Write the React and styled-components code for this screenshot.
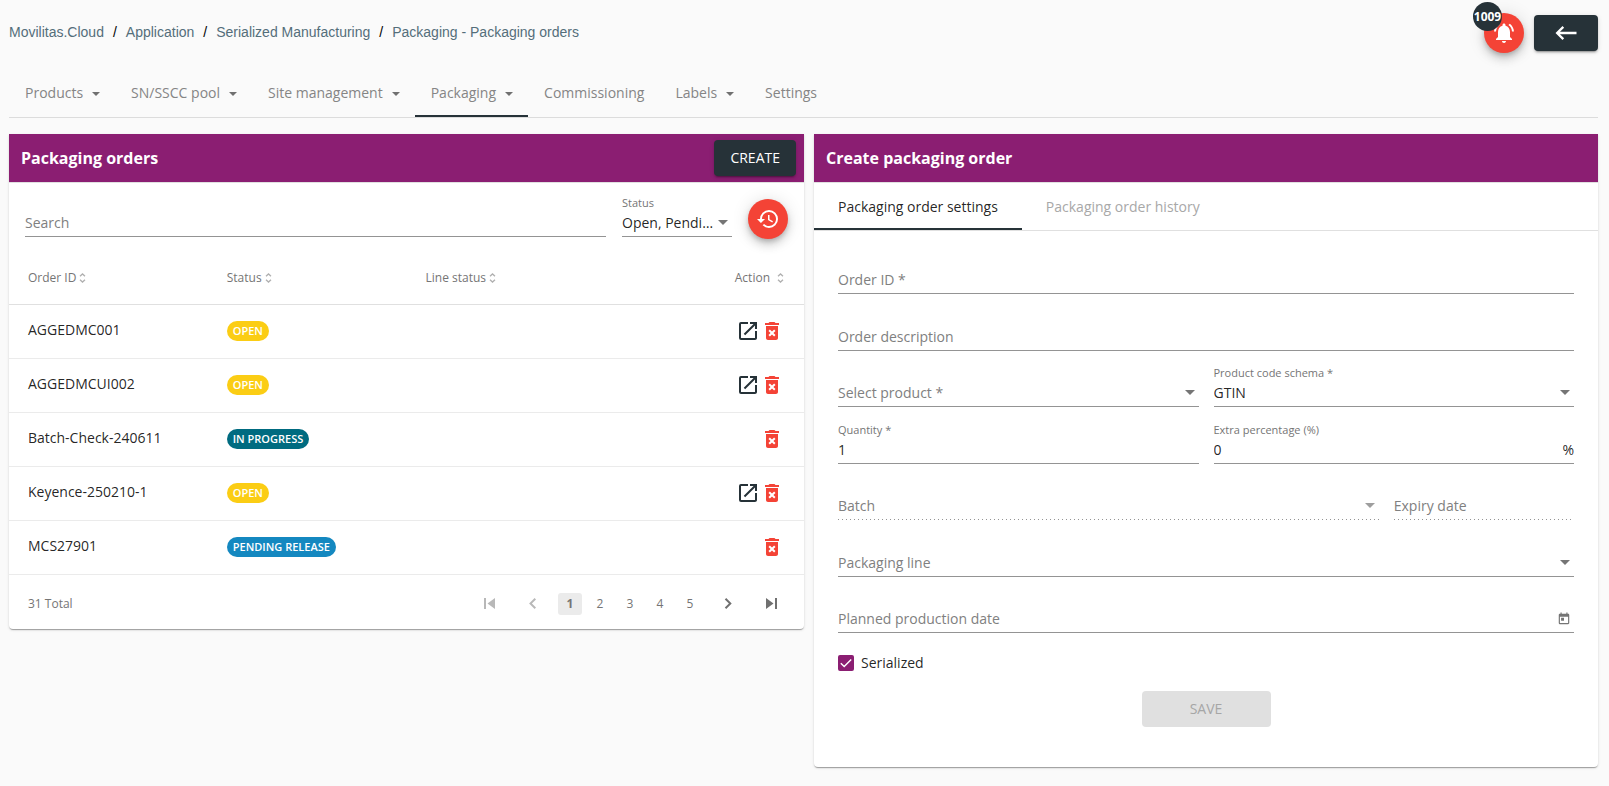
import React, { useState } from 'react';
import styled, { createGlobalStyle, css } from 'styled-components';
import {
  MdDeleteForever,
  MdHistory,
  MdKeyboardBackspace,
  MdNotificationsActive,
  MdOpenInNew,
  MdToday,
} from 'react-icons/md';

const GlobalStyle = createGlobalStyle`
  *, *::before, *::after {
    box-sizing: border-box;
  }

  body {
    margin: 0;
    background-color: #fafafa;
    color: rgba(0, 0, 0, 0.87);
    font-family: 'Open Sans', 'Noto Sans', sans-serif;
    font-size: 14px;
    line-height: 20px;
  }

  button, input, select {
    font: inherit;
    color: inherit;
  }

  button {
    padding: 0;
    border: none;
    background: none;
    cursor: pointer;
  }
`;

const Page = styled.div`
  padding: 0 11px 18px 9px;
`;

const TopBar = styled.header`
  display: flex;
  align-items: center;
  justify-content: space-between;
  height: 66px;
`;

const Breadcrumb = styled.nav`
  display: flex;
  gap: 9px;
  padding-bottom: 2px;
  color: #000;
  font-family: 'Liberation Sans', Arial, sans-serif;

  a {
    color: #546e7a;
    text-decoration: none;
  }
`;

const TopActions = styled.div`
  display: flex;
  align-items: center;
  gap: 10px;
`;

const RoundButton = styled.button`
  position: relative;
  display: flex;
  flex: none;
  align-items: center;
  justify-content: center;
  width: 40px;
  height: 40px;
  border-radius: 50%;
  background-color: #f44336;
  color: #fff;
  box-shadow: 0 3px 5px -1px rgba(0, 0, 0, 0.2), 0 6px 10px 0 rgba(0, 0, 0, 0.14),
    0 1px 18px 0 rgba(0, 0, 0, 0.12);
`;

const Badge = styled.span`
  position: absolute;
  top: -11px;
  left: -11px;
  width: 29px;
  height: 29px;
  border-radius: 50%;
  background-color: #263238;
  font-size: 12px;
  font-weight: 700;
  line-height: 29px;
  text-align: center;
`;

const RaisedButton = styled.button`
  display: flex;
  align-items: center;
  justify-content: center;
  min-width: 64px;
  height: 36px;
  padding: 0 16px;
  border-radius: 4px;
  background-color: #263238;
  color: #fff;
  box-shadow: 0 3px 1px -2px rgba(0, 0, 0, 0.2), 0 2px 2px 0 rgba(0, 0, 0, 0.14),
    0 1px 5px 0 rgba(0, 0, 0, 0.12);

  &:disabled {
    background-color: #e0e0e0;
    color: #a6a6a6;
    box-shadow: none;
    cursor: default;
  }
`;

const SaveButton = styled(RaisedButton)`
  width: 129px;
  margin: 18px auto 0;
`;

const MainNav = styled.nav`
  display: flex;
  height: 52px;
  border-bottom: 1px solid #dcdcdc;
`;

const NavItem = styled.a`
  display: flex;
  align-items: center;
  gap: 9px;
  padding: 6px 15px 1px 16px;
  border-bottom: 2px solid ${(p) => (p.$active ? '#263238' : 'transparent')};
  color: #858585;
  text-decoration: none;
`;

const Columns = styled.main`
  display: grid;
  grid-template-columns: minmax(0, 795fr) minmax(0, 784fr);
  align-items: start;
  gap: 10px;
  margin-top: 16px;
`;

const Card = styled.section`
  border-radius: 0 0 4px 4px;
  background-color: #fff;
  box-shadow: 0 2px 1px -1px rgba(0, 0, 0, 0.2), 0 1px 1px 0 rgba(0, 0, 0, 0.14),
    0 1px 3px 0 rgba(0, 0, 0, 0.12);
`;

const CardHeader = styled.div`
  display: flex;
  align-items: center;
  justify-content: space-between;
  height: 48px;
  padding: 0 8px 0 12px;
  background-color: #8b1e72;
`;

const CardTitle = styled.h2`
  margin: 0;
  color: #fff;
  font-size: 16px;
  font-weight: 700;
`;

const FieldBox = styled.div`
  display: flex;
  flex: ${(p) => p.$grow || 1};
  flex-direction: column;
  justify-content: flex-end;
  min-width: 0;
  border-bottom: 1px solid #949494;

  ${(p) => p.$fixed && css`
    flex: none;
    width: 110px;
  `}

  ${(p) => p.$disabled && css`
    padding-bottom: 1px;
    border-bottom: none;
    background: linear-gradient(to right, #949494 1px, transparent 1px) 0 100% / 4px 1px repeat-x;
  `}
`;

const Filters = styled.div`
  display: flex;
  align-items: flex-end;
  gap: 16px;
  height: 64px;
  padding: 0 16px 7px;
  border-top: 1px solid #e0e0e0;

  ${FieldBox} {
    margin-bottom: 2px;
  }
`;

const FieldLabel = styled.label`
  color: #757575;
  font-size: 11px;
  line-height: 16px;
`;

const Control = styled.div`
  display: grid;
  grid-template-columns: minmax(0, 1fr);
  align-items: center;
  height: 25px;
  padding-bottom: 2px;

  & > * {
    grid-area: 1 / 1;
  }
`;

const controlStyle = css`
  width: 100%;
  height: 20px;
  margin: 0;
  padding: 0;
  border: none;
  outline: none;
  background: transparent;
  line-height: 20px;
`;

const TextInput = styled.input`
  ${controlStyle}

  &::placeholder {
    color: #808080;
    opacity: 1;
  }
`;

const SelectInput = styled.select`
  ${controlStyle}
  appearance: none;
  padding-right: 18px;
  overflow: hidden;
  color: ${(p) => (p.$empty ? '#808080' : 'rgba(0, 0, 0, 0.87)')};
  text-overflow: ellipsis;
  white-space: nowrap;
  opacity: 1;
`;

const Caret = styled.span`
  margin-top: 2px;
  border: solid transparent;
  border-width: 4px 4px 0;
  border-top-color: #707070;
`;

const SelectCaret = styled.span`
  justify-self: end;
  margin-right: 4px;
  border: solid transparent;
  border-width: 5px 5px 0;
  border-top-color: ${(p) => (p.$disabled ? '#9e9e9e' : '#757575')};
  pointer-events: none;
`;

const Suffix = styled.span`
  justify-self: end;
`;

const CalendarButton = styled.button`
  display: flex;
  justify-self: end;
  margin-right: 3px;
  color: #757575;
`;

const Table = styled.table`
  width: 100%;
  border-collapse: collapse;
  table-layout: fixed;
`;

const HeadCell = styled.th`
  height: 58px;
  padding: 7px 20px 0 19px;
  border-bottom: 1px solid #e0e0e0;
  color: #757575;
  font-size: 12px;
  font-weight: 400;
  text-align: ${(p) => (p.$right ? 'right' : 'left')};
`;

const SortButton = styled.button`
  display: inline-flex;
  align-items: center;
  gap: ${(p) => (p.$wide ? '7px' : '3px')};
`;

const Cell = styled.td`
  height: 54px;
  padding: 0 20px 3px 19px;
  border-bottom: 1px solid #ebebeb;
`;

const STATUS_COLORS = {
  OPEN: '#fbcd14',
  'IN PROGRESS': '#006b80',
  'PENDING RELEASE': '#1488c0',
};

const StatusPill = styled.span`
  display: inline-block;
  margin-top: 2px;
  padding: 0 6px;
  border-radius: 10px;
  background-color: ${(p) => STATUS_COLORS[p.$status]};
  color: #fff;
  font-size: 11px;
  font-weight: 600;
  vertical-align: middle;
`;

const RowActions = styled.div`
  display: flex;
  justify-content: flex-end;
  margin-top: 2px;
`;

const IconButton = styled.button`
  display: flex;
  color: ${(p) => p.$color};
`;

const TableFooter = styled.footer`
  display: flex;
  align-items: center;
  justify-content: space-between;
  height: 54px;
  padding: 4px 11px 0 19px;
  color: #757575;
  font-size: 12px;
`;

const Pager = styled.nav`
  display: flex;
  align-items: center;
`;

const PagerArrow = styled.button`
  display: flex;
  justify-content: center;
  width: 44px;
  color: #707070;

  &:disabled {
    color: #b8b8b8;
    cursor: default;
  }
`;

const PageButton = styled.button`
  width: 24px;
  height: 22px;
  margin: 0 3px;
  border-radius: 3px;
  background-color: ${(p) => (p.$active ? '#ebebeb' : 'transparent')};
  font-weight: ${(p) => (p.$active ? 700 : 400)};
`;

const TabList = styled.div`
  display: flex;
  height: 49px;
  border-top: 1px solid #e0e0e0;
  border-bottom: 1px solid #e0e0e0;
`;

const Tab = styled.button`
  padding: 2px 24px 0;
  border-bottom: 2px solid ${(p) => (p.$active ? '#263238' : 'transparent')};
  color: ${(p) => (p.$active ? 'rgba(0, 0, 0, 0.87)' : '#a8a8a8')};
`;

const Form = styled.form`
  padding: 7px 24px 40px;
`;

const FormRows = styled.div`
  display: grid;
  grid-auto-rows: 56px 57px;
`;

const FormRow = styled.div`
  display: flex;
  gap: 15px;
`;

const CheckLabel = styled.label`
  display: flex;
  align-items: center;
  gap: 7px;
  margin-top: 20px;
`;

const CheckBox = styled.span`
  display: grid;
  width: 16px;
  height: 16px;

  & > * {
    grid-area: 1 / 1;
  }

  svg {
    pointer-events: none;
  }
`;

const CheckInput = styled.input`
  appearance: none;
  width: 16px;
  height: 16px;
  margin: 0;
  border: 2px solid #757575;
  border-radius: 2px;

  &:checked {
    border-color: #8b1e72;
    background-color: #8b1e72;
  }
`;

function SortIcon() {
  return (
    <svg width="7" height="10" viewBox="0 0 7 10" fill="none" stroke="#b0b0b0" strokeWidth="1.3">
      <path d="M1 3.2 3.5.9 6 3.2M1 6.8l2.5 2.3L6 6.8" />
    </svg>
  );
}

const PAGER_PATHS = {
  first: 'M0 0h2v11H0zM11 0v11L3.5 5.5z',
  prev: 'M6.6 0 8 1.4 3.9 5.5 8 9.6 6.6 11 1.1 5.5z',
  next: 'M4.2 0 2.8 1.4 6.9 5.5 2.8 9.6 4.2 11l5.5-5.5z',
  last: 'M9 0h2v11H9zM0 0v11l7.5-5.5z',
};

function PagerIcon({ name }) {
  return (
    <svg width="11" height="11" viewBox="0 0 11 11" fill="currentColor">
      <path d={PAGER_PATHS[name]} />
    </svg>
  );
}

function Field({ id, label, floating, grow, fixed, suffix, calendar, ...rest }) {
  return (
    <FieldBox $grow={grow} $fixed={fixed} $disabled={rest.disabled}>
      {floating && <FieldLabel htmlFor={id}>{label}</FieldLabel>}
      <Control>
        <TextInput
          id={id}
          type="text"
          placeholder={floating ? undefined : label}
          aria-label={floating ? undefined : label}
          {...rest}
        />
        {suffix && <Suffix>{suffix}</Suffix>}
        {calendar && (
          <CalendarButton type="button" aria-label="Open calendar">
            <MdToday size={14} />
          </CalendarButton>
        )}
      </Control>
    </FieldBox>
  );
}

function SelectField({ id, label, floating, value, grow, fixed, disabled }) {
  return (
    <FieldBox $grow={grow} $fixed={fixed} $disabled={disabled}>
      {floating && <FieldLabel htmlFor={id}>{label}</FieldLabel>}
      <Control>
        <SelectInput
          id={id}
          aria-label={floating ? undefined : label}
          $empty={!value}
          disabled={disabled}
        >
          <option>{value || label}</option>
        </SelectInput>
        <SelectCaret $disabled={disabled} />
      </Control>
    </FieldBox>
  );
}

const crumbs = ['Movilitas.Cloud', 'Application', 'Serialized Manufacturing', 'Packaging - Packaging orders'];

const navItems = [
  { label: 'Products', menu: true },
  { label: 'SN/SSCC pool', menu: true },
  { label: 'Site management', menu: true },
  { label: 'Packaging', menu: true, active: true },
  { label: 'Commissioning' },
  { label: 'Labels', menu: true },
  { label: 'Settings' },
];

const orders = [
  { id: 'AGGEDMC001', status: 'OPEN' },
  { id: 'AGGEDMCUI002', status: 'OPEN' },
  { id: 'Batch-Check-240611', status: 'IN PROGRESS' },
  { id: 'Keyence-250210-1', status: 'OPEN' },
  { id: 'MCS27901', status: 'PENDING RELEASE' },
];

function OrdersCard() {
  const [page, setPage] = useState(1);

  return (
    <Card>
      <CardHeader>
        <CardTitle>Packaging orders</CardTitle>
        <RaisedButton type="button">CREATE</RaisedButton>
      </CardHeader>
      <Filters>
        <Field id="search" label="Search" />
        <SelectField id="status" label="Status" floating fixed value="Open, Pending Release, In Progress" />
        <RoundButton type="button" aria-label="History">
          <MdHistory size={24} />
        </RoundButton>
      </Filters>
      <Table>
        <thead>
          <tr>
            {['Order ID', 'Status', 'Line status', 'Action'].map((name) => (
              <HeadCell key={name} $right={name === 'Action'}>
                <SortButton type="button" $wide={name === 'Action'}>
                  {name}
                  <SortIcon />
                </SortButton>
              </HeadCell>
            ))}
          </tr>
        </thead>
        <tbody>
          {orders.map((order) => (
            <tr key={order.id}>
              <Cell>{order.id}</Cell>
              <Cell>
                <StatusPill $status={order.status}>{order.status}</StatusPill>
              </Cell>
              <Cell />
              <Cell>
                <RowActions>
                  {order.status === 'OPEN' && (
                    <IconButton type="button" aria-label={`Open ${order.id}`} $color="#263238">
                      <MdOpenInNew size={24} />
                    </IconButton>
                  )}
                  <IconButton type="button" aria-label={`Delete ${order.id}`} $color="#f44336">
                    <MdDeleteForever size={24} />
                  </IconButton>
                </RowActions>
              </Cell>
            </tr>
          ))}
        </tbody>
      </Table>
      <TableFooter>
        <span>31 Total</span>
        <Pager aria-label="Pages">
          <PagerArrow aria-label="First page" disabled={page === 1} onClick={() => setPage(1)}>
            <PagerIcon name="first" />
          </PagerArrow>
          <PagerArrow aria-label="Previous page" disabled={page === 1} onClick={() => setPage(page - 1)}>
            <PagerIcon name="prev" />
          </PagerArrow>
          {[1, 2, 3, 4, 5].map((n) => (
            <PageButton key={n} $active={n === page} onClick={() => setPage(n)}>
              {n}
            </PageButton>
          ))}
          <PagerArrow aria-label="Next page" disabled={page === 5} onClick={() => setPage(page + 1)}>
            <PagerIcon name="next" />
          </PagerArrow>
          <PagerArrow aria-label="Last page" disabled={page === 5} onClick={() => setPage(5)}>
            <PagerIcon name="last" />
          </PagerArrow>
        </Pager>
      </TableFooter>
    </Card>
  );
}

function OrderForm() {
  const [tab, setTab] = useState(0);

  return (
    <Card>
      <CardHeader>
        <CardTitle>Create packaging order</CardTitle>
      </CardHeader>
      <TabList role="tablist">
        {['Packaging order settings', 'Packaging order history'].map((name, index) => (
          <Tab
            key={name}
            type="button"
            role="tab"
            aria-selected={index === tab}
            $active={index === tab}
            onClick={() => setTab(index)}
          >
            {name}
          </Tab>
        ))}
      </TabList>
      <Form onSubmit={(e) => e.preventDefault()}>
        <FormRows>
          <FormRow>
            <Field id="order-id" label="Order ID *" />
          </FormRow>
          <FormRow>
            <Field id="order-description" label="Order description" />
          </FormRow>
          <FormRow>
            <SelectField id="product" label="Select product *" />
            <SelectField id="schema" label="Product code schema *" floating value="GTIN" />
          </FormRow>
          <FormRow>
            <Field id="quantity" label="Quantity *" floating defaultValue="1" />
            <Field id="extra" label="Extra percentage (%)" floating defaultValue="0" suffix="%" />
          </FormRow>
          <FormRow>
            <SelectField id="batch" label="Batch" grow={3} disabled />
            <Field id="expiry" label="Expiry date" disabled />
          </FormRow>
          <FormRow>
            <SelectField id="line" label="Packaging line" />
          </FormRow>
          <FormRow>
            <Field id="planned" label="Planned production date" calendar />
          </FormRow>
        </FormRows>
        <CheckLabel>
          <CheckBox>
            <CheckInput type="checkbox" defaultChecked />
            <svg width="16" height="16" viewBox="0 0 16 16" fill="none" stroke="#fff" strokeWidth="1.4">
              <path d="m2.8 8.2 3.4 3.4 7-7.2" />
            </svg>
          </CheckBox>
          Serialized
        </CheckLabel>
        <SaveButton type="submit" disabled>
          SAVE
        </SaveButton>
      </Form>
    </Card>
  );
}

function App() {
  return (
    <>
      <GlobalStyle />
      <Page>
        <TopBar>
          <Breadcrumb aria-label="Breadcrumb">
            {crumbs.map((crumb, index) => (
              <React.Fragment key={crumb}>
                {index > 0 && <span>/</span>}
                <a href="#">{crumb}</a>
              </React.Fragment>
            ))}
          </Breadcrumb>
          <TopActions>
            <RoundButton type="button">
              <MdNotificationsActive size={24} />
              <Badge>1009</Badge>
            </RoundButton>
            <RaisedButton type="button" aria-label="Back">
              <MdKeyboardBackspace size={28} />
            </RaisedButton>
          </TopActions>
        </TopBar>
        <MainNav>
          {navItems.map((item) => (
            <NavItem key={item.label} href="#" $active={item.active}>
              {item.label}
              {item.menu && <Caret />}
            </NavItem>
          ))}
        </MainNav>
        <Columns>
          <OrdersCard />
          <OrderForm />
        </Columns>
      </Page>
    </>
  );
}

export default App;
